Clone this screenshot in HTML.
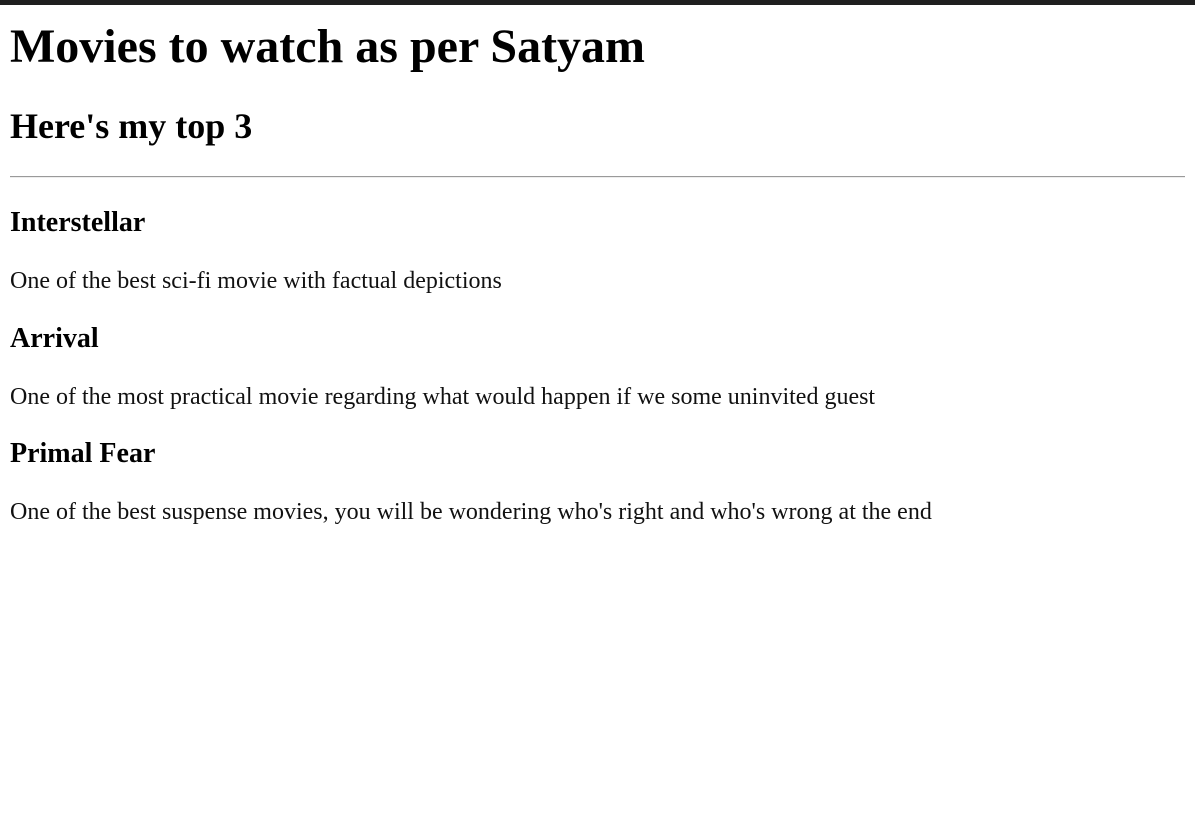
<!DOCTYPE html>
<html><head><meta charset="utf-8"><style>
html,body{margin:0;background:#fff}
body{border-top:5px solid #1f1f1f;padding:0 10px;font-family:"Liberation Serif",serif;color:#000}
h1{font-size:48px;line-height:55px;margin:14px 0 32px;font-weight:bold}
h2{font-size:36px;line-height:41px;margin:0 0 29px;font-weight:bold}
hr{margin:0 0 29px;border:0;border-top:1px solid #9a9a9a;border-bottom:1px solid #eee;height:0}
h3{font-size:28px;line-height:32px;margin:0 0 28px;font-weight:bold}
p{font-size:24px;line-height:28px;margin:0 0 27.5px;color:#111}
</style></head><body>
<h1>Movies to watch as per Satyam</h1>
<h2>Here's my top 3</h2>
<hr>
<h3>Interstellar</h3>
<p>One of the best sci-fi movie with factual depictions</p>
<h3>Arrival</h3>
<p>One of the most practical movie regarding what would happen if we some uninvited guest</p>
<h3>Primal Fear</h3>
<p>One of the best suspense movies, you will be wondering who's right and who's wrong at the end</p>
</body></html>
